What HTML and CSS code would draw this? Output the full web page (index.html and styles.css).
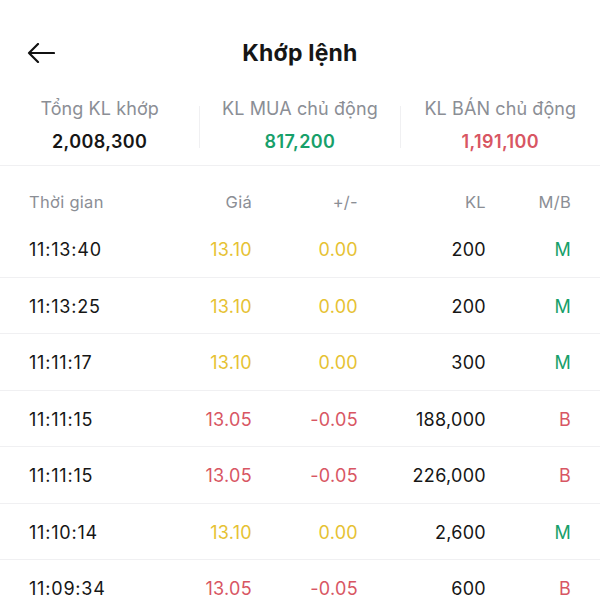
FILE: index.html
```html
<!DOCTYPE html>
<html lang="vi">
<head>
<meta charset="utf-8">
<link rel="stylesheet" href="styles.css">
</head>
<body>
<div class="screen">
  <header class="topbar">
    <svg class="back" width="28" height="20" viewBox="0 0 28 20"><path d="M27 10H2M11 1L2 10l9 9" fill="none" stroke="#111" stroke-width="2.2" stroke-linecap="round" stroke-linejoin="round"/></svg>
    <h1 class="title">Khớp lệnh</h1>
  </header>
  <section class="summary">
    <div class="stat"><div class="label">Tổng KL khớp</div><div class="value">2,008,300</div></div>
    <div class="divider"></div>
    <div class="stat"><div class="label">KL MUA chủ động</div><div class="value up">817,200</div></div>
    <div class="divider"></div>
    <div class="stat"><div class="label">KL BÁN chủ động</div><div class="value down">1,191,100</div></div>
  </section>
  <div class="table">
    <div class="row head"><span>Thời gian</span><span>Giá</span><span>+/-</span><span>KL</span><span>M/B</span></div>
    <div class="row"><span>11:13:40</span><span class="ref">13.10</span><span class="ref">0.00</span><span>200</span><span class="up">M</span></div>
    <div class="row"><span>11:13:25</span><span class="ref">13.10</span><span class="ref">0.00</span><span>200</span><span class="up">M</span></div>
    <div class="row"><span>11:11:17</span><span class="ref">13.10</span><span class="ref">0.00</span><span>300</span><span class="up">M</span></div>
    <div class="row"><span>11:11:15</span><span class="down">13.05</span><span class="down">-0.05</span><span>188,000</span><span class="down">B</span></div>
    <div class="row"><span>11:11:15</span><span class="down">13.05</span><span class="down">-0.05</span><span>226,000</span><span class="down">B</span></div>
    <div class="row"><span>11:10:14</span><span class="ref">13.10</span><span class="ref">0.00</span><span>2,600</span><span class="up">M</span></div>
    <div class="row"><span>11:09:34</span><span class="down">13.05</span><span class="down">-0.05</span><span>600</span><span class="down">B</span></div>
  </div>
</div>
</body>
</html>
```

FILE: styles.css
```css
html, body { margin: 0; padding: 0; background: #fff; }
body { font-family: Inter, "Noto Sans", sans-serif; color: #161616; width: 600px; height: 600px; overflow: hidden; }
.screen { display: flex; flex-direction: column; }
.topbar { position: relative; height: 60px; margin-top: 23px; display: flex; align-items: center; justify-content: center; }
.back { position: absolute; left: 27px; top: 20px; }
.title { margin: 0; font-size: 23px; font-weight: 700; letter-spacing: 0.2px; }
.summary { display: flex; align-items: center; height: 83px; border-bottom: 1px solid #f0f0f2; box-sizing: border-box; padding-top: 1px; }
.stat { flex: 1; display: flex; flex-direction: column; align-items: center; gap: 12px; }
.label { font-size: 18px; color: #8b8e95; letter-spacing: 0.1px; }
.value { font-size: 18px; font-weight: 600; letter-spacing: 0.4px; }
.divider { width: 1px; height: 42px; background: #f0f0f2; margin-top: 4px; }
.up { color: #17a06a; }
.down { color: #d85663; }
.ref { color: #e6c233; }
.table { display: flex; flex-direction: column; }
.row { display: grid; grid-template-columns: 29px 130px 93px 106px 128px 85px; height: 56.5px; align-items: center; border-bottom: 1px solid #f0f0f2; box-sizing: border-box; font-size: 18px; padding-top: 2px; }
.row::before { content: ""; }
.row span { text-align: right; letter-spacing: 0.3px; }
.row span:first-child { text-align: left; letter-spacing: 0.8px; }
.head { height: 55px; padding-top: 17px; border-bottom: none; font-size: 16.5px; color: #8b8e95; }
.head span { letter-spacing: 0.3px; }
.head span:first-child { letter-spacing: 0.3px; }
```
